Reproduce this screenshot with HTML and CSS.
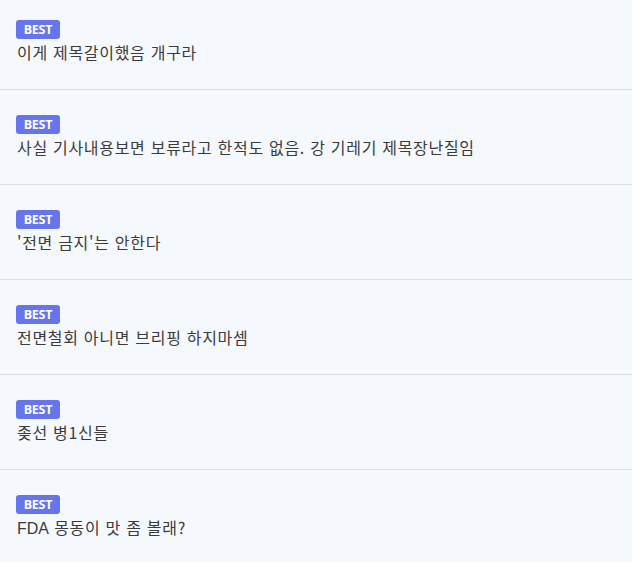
FILE: index.html
```html
<!DOCTYPE html>
<html lang="ko">
<head>
<meta charset="utf-8">
<link rel="stylesheet" href="styles.css">
</head>
<body>
<div class="board">
  <div class="item"><span class="badge">BEST</span><p class="title">이게 제목갈이했음 개구라</p></div>
  <div class="item"><span class="badge">BEST</span><p class="title">사실 기사내용보면 보류라고 한적도 없음. 강 기레기 제목장난질임</p></div>
  <div class="item"><span class="badge">BEST</span><p class="title">'전면 금지'는 안한다</p></div>
  <div class="item"><span class="badge">BEST</span><p class="title">전면철회 아니면 브리핑 하지마셈</p></div>
  <div class="item"><span class="badge">BEST</span><p class="title">좆선 병1신들</p></div>
  <div class="item"><span class="badge">BEST</span><p class="title"><span class="latin">FDA</span> 몽동이 맛 좀 볼래?</p></div>
</div>
</body>
</html>
```
FILE: styles.css
```css
html, body {
  margin: 0;
  padding: 0;
  background: #ffffff;
}
.board {
  width: 632px;
  height: 562px;
  overflow: hidden;
  background: #f5f8fd;
}
.item {
  box-sizing: border-box;
  height: 95px;
  padding: 25px 16px 0;
  border-bottom: 1px solid #dcdfe4;
  display: flex;
  flex-direction: column;
  align-items: flex-start;
}
.item:first-child {
  height: 90px;
  padding-top: 20px;
}
.badge {
  display: inline-flex;
  align-items: center;
  justify-content: center;
  width: 44px;
  height: 19px;
  border-radius: 3px;
  background: #6675ea;
  color: #ffffff;
  font-family: "Open Sans", "Noto Sans", sans-serif;
  font-weight: 700;
  font-size: 12.5px;
  line-height: 19px;
  letter-spacing: -0.2px;
}
.title {
  margin: 3px 0 0 1px;
  font-family: "Noto Sans CJK KR", "Noto Sans", sans-serif;
  font-size: 16px;
  line-height: 20px;
  letter-spacing: 0.7px;
  color: #3b3b3b;
}
.latin {
  font-family: "Liberation Sans", sans-serif;
  letter-spacing: 0;
}
```
